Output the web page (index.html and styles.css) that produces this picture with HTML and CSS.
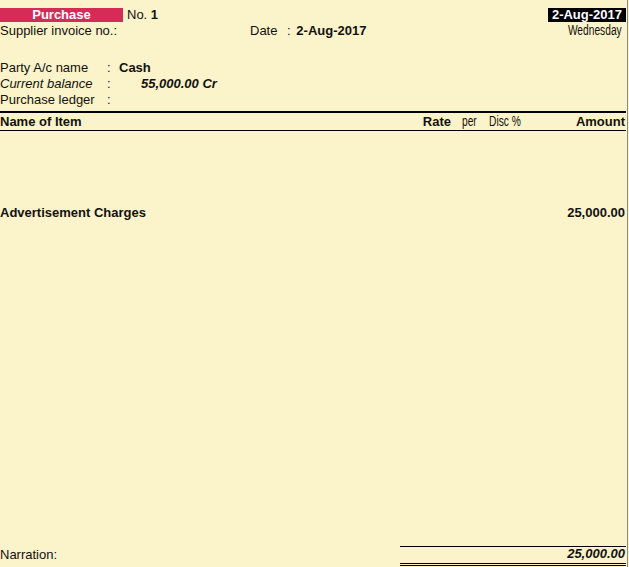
FILE: index.html
```html
<!DOCTYPE html>
<html lang="en">
<head>
    <meta charset="UTF-8">
    <meta name="viewport" content="width=device-width, initial-scale=1.0">
    <title>Purchase Voucher</title>
    <link rel="stylesheet" href="styles.css">
</head>
<body>
    <div class="voucher">
        <div class="top-row">
            <span class="vch-type">Purchase</span>
            <span class="vch-no">No. <b>1</b></span>
            <span class="vch-date">2-Aug-2017</span>
        </div>
        <div class="sub-row">
            <span class="supplier">Supplier invoice no.:</span>
            <span class="date">Date <span class="colon">:</span> <b>2-Aug-2017</b></span>
            <span class="weekday narrow to-right">Wednesday</span>
        </div>

        <div class="party">
            <span>Party A/c name</span><span class="colon">:</span><b>Cash</b>
            <i>Current balance</i><span class="colon">:</span><b class="balance">55,000.00 Cr</b>
            <span>Purchase ledger</span><span class="colon">:</span><span></span>
        </div>

        <div class="cols head">
            <b>Name of Item</b>
            <b class="rate">Rate</b>
            <span class="per"><span class="narrow">per</span></span>
            <span class="disc"><span class="narrow">Disc %</span></span>
            <b class="amount">Amount</b>
        </div>

        <div class="items">
            <div class="cols item">
                <b>Advertisement Charges</b>
                <span></span>
                <span></span>
                <span></span>
                <b class="amount">25,000.00</b>
            </div>
        </div>

        <div class="foot">
            <span>Narration:</span>
            <b class="total">25,000.00</b>
        </div>
    </div>
</body>
</html>
```

FILE: styles.css
```css
:root {
    --paper: #fbf3c9;
    --ink: #111111;
    --crimson: #d62b57;
    --edge: #8a8a86;
}
* {
    margin: 0;
    padding: 0;
    box-sizing: border-box;
}

body {
    background-color: var(--paper);
    color: var(--ink);
    font-family: "Liberation Sans", Arial, sans-serif;
    font-size: 13px;
    line-height: 16px;
}

/* no narrow face installed, squeeze the regular one */
.narrow {
    display: inline-block;
    white-space: nowrap;
    font-size: 14px;
    line-height: 14px;
    transform: scaleX(0.73);
    transform-origin: left center;
}
.narrow.to-right {
    transform-origin: right center;
}

.voucher {
    width: 628px;
    height: 567px;
    padding-top: 8px;
    border-right: 1px solid var(--edge);
    display: flex;
    flex-direction: column;
}

.top-row {
    display: flex;
    align-items: center;
    height: 14px;
    line-height: 14px;
}
.vch-type {
    width: 123px;
    background-color: var(--crimson);
    color: #ffffff;
    font-weight: bold;
    text-align: center;
}
.vch-no {
    margin-left: 4px;
}
.vch-date {
    margin-left: auto;
    margin-right: 1px;
    padding: 0 4px;
    background-color: #000000;
    color: #ffffff;
    font-weight: bold;
}

.sub-row {
    display: flex;
    margin-top: 1px;
}
.supplier {
    width: 250px;
}
.date .colon {
    margin: 0 2px 0 6px;
}
.weekday {
    margin-left: auto;
    margin-right: 5px;
}

.party {
    margin-top: 21px;
    display: grid;
    grid-template-columns: 107px 12px auto;
}
.party .balance {
    font-style: italic;
    margin-left: 22px;
}

.cols {
    display: grid;
    grid-template-columns: 1fr 40px 38px 40px 97px;
    white-space: nowrap;
}
.head {
    margin-top: 3px;
    padding-top: 1px;
    border-top: 2px solid #000000;
    border-bottom: 1px solid #000000;
    margin-right: 1px;
}
.rate {
    text-align: right;
}
.per {
    padding-left: 11px;
}
.amount {
    text-align: right;
    padding-right: 1px;
}

.items {
    flex: 1;
    padding-top: 74px;
    margin-right: 1px;
}

.foot {
    display: grid;
    grid-template-columns: 1fr 226px;
    align-items: end;
    margin-bottom: 1px;
    margin-right: 1px;
}
.foot span {
    padding-bottom: 3px;
}
.total {
    font-style: italic;
    text-align: right;
    padding-right: 1px;
    padding-bottom: 2px;
    line-height: 14px;
    border-top: 1px solid #000000;
    border-bottom: 3px double #000000;
}
```
